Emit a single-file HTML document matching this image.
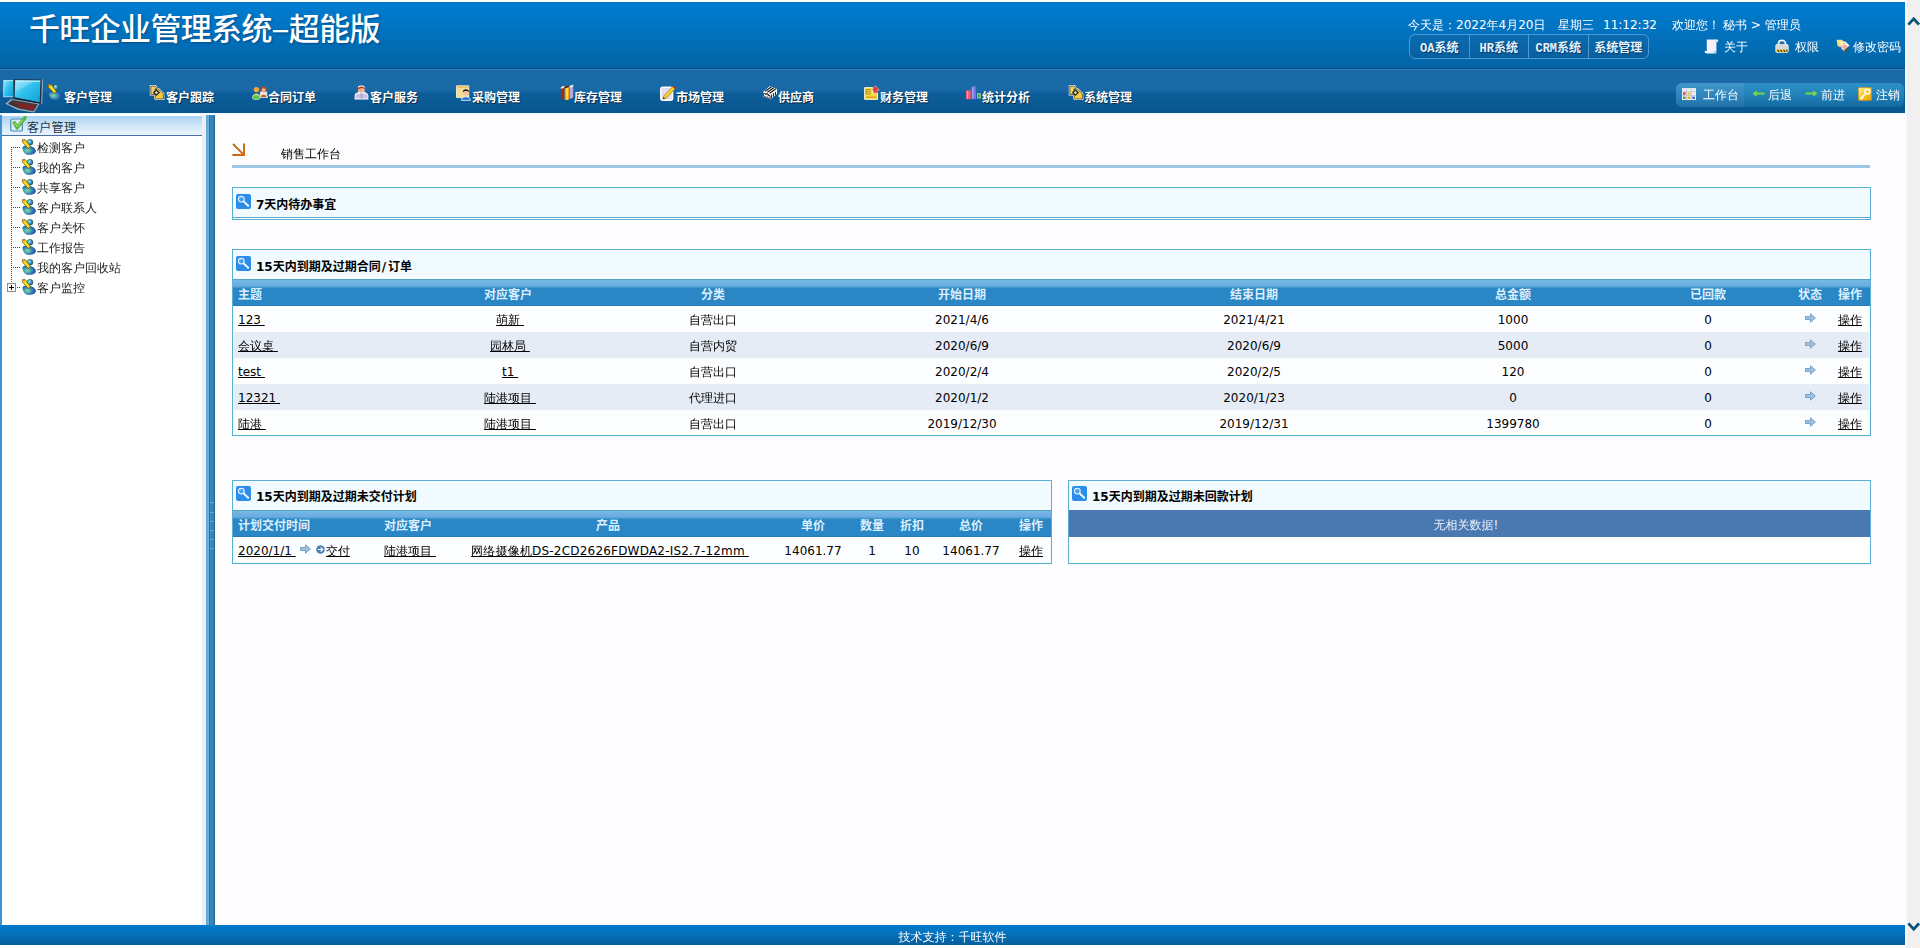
<!DOCTYPE html>
<html lang="zh-CN">
<head>
<meta charset="utf-8">
<title>千旺企业管理系统-超能版</title>
<style>
html,body{margin:0;padding:0;width:1920px;height:948px;overflow:hidden;background:#fff;}
body{position:relative;font-family:"DejaVu Sans","Liberation Sans","WenQuanYi Zen Hei","Noto Sans CJK SC",sans-serif;font-size:12px;color:#000;}
.abs{position:absolute;}
a{color:#000;text-decoration:underline;}
svg{display:block;}
.bf,.nv,.ptitle,.th,.thl{font-family:"DejaVu Sans","Liberation Sans","Noto Sans CJK SC",sans-serif;}

/* ---------- header ---------- */
#hdr{left:0;top:2px;width:1905px;height:66px;background:linear-gradient(#0a6fb8 0px,#007bce 2px,#007acc 8px,#0273c0 28px,#0364a5 66px);}
#hdrline{left:0;top:68px;width:1905px;height:1px;background:#064b84;}
#hdrline2{left:0;top:69px;width:1905px;height:1px;background:#3482bb;}
#title{left:29px;top:6px;font-family:"Liberation Sans","Noto Sans CJK SC",sans-serif;font-weight:500;font-size:31px;line-height:42px;color:#fff;white-space:nowrap;letter-spacing:-0.65px;text-shadow:1px 1px 2px rgba(0,40,90,.55);}
#title span{display:inline-block;width:17px;text-align:center;letter-spacing:0;font-weight:normal;font-family:"Noto Sans CJK SC",sans-serif;}
#title span b{display:inline-block;transform:scaleX(1.9);font-weight:normal;}
#today{left:1408px;top:17px;height:16px;line-height:16px;color:#fff;white-space:nowrap;font-size:12px;}
#sysbtns{left:1409px;top:34px;width:238px;height:23px;border:1px solid #4b9ad6;border-radius:6px;background:linear-gradient(#0b6bb0,#09609f);overflow:hidden;display:flex;}
#sysbtns div{width:59px;border-right:1px solid #4b9ad6;height:23px;line-height:29px;text-align:center;color:#e6f3ff;font-weight:bold;font-size:12px;font-family:"Liberation Mono","Noto Sans CJK SC",monospace;text-shadow:1px 1px 1px #033a66;}
#sysbtns div:last-child{border-right:0;width:60px;}
#today span{position:absolute;top:0;}
.toplink{color:#fff;white-space:nowrap;height:16px;line-height:16px;font-size:12px;}

/* ---------- nav ---------- */
#nav{left:0;top:70px;width:1905px;height:43px;background:linear-gradient(#1a6aa7 0px,#196aa7 18px,#1667a3 21px,#0c5d99 24px,#0a5b96 30px,#09568f 43px);}
#navline{left:0;top:113px;width:1905px;height:2px;background:linear-gradient(#e6f4fd,#ffffff);}
.nv{top:90px;height:16px;line-height:16px;color:#fff;font-weight:bold;font-size:12px;white-space:nowrap;text-shadow:1px 1px 0 #0a2f52,0 1px 0 #0a2f52;}
.ni{top:84px;width:16px;height:16px;}
#rnav{left:1676px;top:83px;width:228px;height:24px;border-radius:6px;background:linear-gradient(#2e8fc6 0%,#2282ba 50%,#12699f 100%);}
#rnav1{left:1676px;top:83px;width:68px;height:24px;border-radius:6px 0 0 6px;background:linear-gradient(#3f97cc 0%,#2f86bd 50%,#1f72a8 100%);}
.rn{top:87px;height:16px;line-height:16px;color:#fff;font-size:12px;white-space:nowrap;}

/* ---------- sidebar ---------- */
#sbL{left:0;top:115px;width:2px;height:810px;background:#3d94d4;}
#sbhead{left:2px;top:116px;width:200px;height:19px;background:linear-gradient(#a9d3f3 0%,#cfe6f8 50%,#e9f4fd 100%);border-bottom:1px solid #4a6ea5;}
#sbhead span{position:absolute;left:25px;top:4px;letter-spacing:0.3px;line-height:16px;font-size:12px;color:#26364c;white-space:nowrap;font-family:"Liberation Sans","Noto Sans CJK SC",sans-serif;}
#sbstrip{left:202px;top:115px;width:4px;height:810px;background:#ecedf8;}
#split1{left:206px;top:115px;width:3px;height:810px;background:linear-gradient(90deg,#5aa3c8,#72b7de);}
#split2{left:209px;top:115px;width:6px;height:810px;background:linear-gradient(90deg,#2c6f9e 0px,#2c6f9e 1px,#3a8cc5 1px,#2b80b9 5px,#2a6089 5px,#2a6089 6px);}
.tr{left:37px;height:16px;line-height:16px;font-size:12px;color:#222;white-space:nowrap;}
.ti{left:21px;width:16px;height:16px;}
.dotsh{left:13px;width:8px;height:1px;background:repeating-linear-gradient(90deg,#444 0 1px,transparent 1px 2px);}
#dotsv{left:11px;top:147px;width:1px;height:136px;background:repeating-linear-gradient(180deg,#444 0 1px,transparent 1px 2px);}

/* ---------- main ---------- */
#main{left:215px;top:115px;width:1690px;height:810px;background:#fdfdff;}
#crumb{left:281px;top:146px;height:16px;line-height:16px;font-size:12px;white-space:nowrap;}
#crumbline{left:232px;top:165px;width:1638px;height:3px;background:#9cc6e4;}
.panel{border:1px solid #5bb0d2;background:#f1faff;box-sizing:border-box;}
.ptitle{font-weight:bold;font-size:12px;line-height:16px;height:16px;white-space:nowrap;color:#000;}
.thead{background:linear-gradient(#5b9fbc 0px,#5b9fbc 1px,#74bae3 1px,#6ba9e3 7px,#4a9fd2 8px,#3b99cc 8.5px,#2a86c4 9.5px,#2a86c4 25.5px,#2476b6 27px);}
.th{color:#dcefff;font-weight:bold;font-size:12px;line-height:16px;height:16px;white-space:nowrap;text-align:center;transform:translateX(-50%);}
.thl{color:#dcefff;font-weight:bold;font-size:12px;line-height:16px;height:16px;white-space:nowrap;}
.td{font-size:12px;line-height:16px;height:16px;white-space:nowrap;text-align:center;transform:translateX(-50%);}
.tdl{font-size:12px;line-height:16px;height:16px;white-space:nowrap;}
.r0{background:#fcfdff;}
.r1{background:#e6ecf6;}

/* ---------- footer / scrollbar ---------- */
#foot{left:0;top:925px;width:1905px;height:20px;background:linear-gradient(#0079cb 0%,#0574c0 35%,#075d9b 100%);}
#foottxt{left:0;top:929px;width:1905px;text-align:center;color:#fff;font-size:12px;line-height:16px;height:16px;}
#sbar{left:1905px;top:0;width:15px;height:948px;background:linear-gradient(90deg,#fafcff 0,#fafcff 1.5px,#f0f0f0 2.5px,#f0f0f0 100%);}
</style>
</head>
<body>
<!-- header -->
<div id="hdr" class="abs"></div>
<div id="hdrline" class="abs"></div>
<div id="hdrline2" class="abs"></div>
<div id="title" class="abs">千旺企业管理系统<span><b>-</b></span>超能版</div>
<div id="today" class="abs"><span style="left:0">今天是：2022年4月20日</span><span style="left:150px">星期三</span><span style="left:195px">11:12:32</span><span style="left:264px">欢迎您！</span><span style="left:315px">秘书 &gt; 管理员</span></div>
<div id="sysbtns" class="abs"><div>OA系统</div><div>HR系统</div><div>CRM系统</div><div>系统管理</div></div>
<div class="abs toplink" style="left:1724px;top:39px;">关于</div>
<div class="abs toplink" style="left:1795px;top:39px;">权限</div>
<div class="abs toplink" style="left:1853px;top:39px;">修改密码</div>

<!-- nav -->
<div id="nav" class="abs"></div>
<div id="navline" class="abs"></div>
<div class="abs nv" style="left:64px;">客户管理</div>
<div class="abs nv" style="left:166px;">客户跟踪</div>
<div class="abs nv" style="left:268px;">合同订单</div>
<div class="abs nv" style="left:370px;">客户服务</div>
<div class="abs nv" style="left:472px;">采购管理</div>
<div class="abs nv" style="left:574px;">库存管理</div>
<div class="abs nv" style="left:676px;">市场管理</div>
<div class="abs nv" style="left:778px;">供应商</div>
<div class="abs nv" style="left:880px;">财务管理</div>
<div class="abs nv" style="left:982px;">统计分析</div>
<div class="abs nv" style="left:1084px;">系统管理</div>
<div id="rnav" class="abs"></div>
<div id="rnav1" class="abs"></div>
<div class="abs rn" style="left:1703px;">工作台</div>
<div class="abs rn" style="left:1768px;">后退</div>
<div class="abs rn" style="left:1821px;">前进</div>
<div class="abs rn" style="left:1876px;">注销</div>

<!-- sidebar -->
<div id="sbL" class="abs"></div>
<div id="sbhead" class="abs"><span>客户管理</span></div>
<div id="sbstrip" class="abs"></div>
<div id="split1" class="abs"></div>
<div id="split2" class="abs"></div>
<div class="abs" style="left:210px;top:502px;width:4px;height:1px;background:#63a8d2;"></div><div class="abs" style="left:210px;top:512px;width:4px;height:1px;background:#63a8d2;"></div><div class="abs" style="left:210px;top:521px;width:4px;height:1px;background:#63a8d2;"></div><div class="abs" style="left:210px;top:530px;width:4px;height:1px;background:#63a8d2;"></div><div class="abs" style="left:210px;top:539px;width:4px;height:1px;background:#63a8d2;"></div><div class="abs" style="left:210px;top:548px;width:4px;height:1px;background:#63a8d2;"></div><div id="dotsv" class="abs"></div><div class="abs dotsh" style="top:147px;"></div><div class="abs dotsh" style="top:167px;"></div><div class="abs dotsh" style="top:187px;"></div><div class="abs dotsh" style="top:207px;"></div><div class="abs dotsh" style="top:227px;"></div><div class="abs dotsh" style="top:247px;"></div><div class="abs dotsh" style="top:267px;"></div><div class="abs dotsh" style="top:287px;left:17px;width:4px;"></div>
<div class="abs tr" style="top:140px;">检测客户</div>
<div class="abs tr" style="top:160px;">我的客户</div>
<div class="abs tr" style="top:180px;">共享客户</div>
<div class="abs tr" style="top:200px;">客户联系人</div>
<div class="abs tr" style="top:220px;">客户关怀</div>
<div class="abs tr" style="top:240px;">工作报告</div>
<div class="abs tr" style="top:260px;">我的客户回收站</div>
<div class="abs tr" style="top:280px;">客户监控</div>

<!-- main -->
<div id="main" class="abs"></div>
<div id="crumb" class="abs">销售工作台</div>
<div id="crumbline" class="abs"></div>

<!--MAINSTART-->
<div class="abs panel" style="left:232px;top:187px;width:1639px;height:33px;"></div>
<div class="abs" style="left:233px;top:217px;width:1637px;height:1px;background:#5fa8c8;"></div>
<div class="abs" style="left:233px;top:218px;width:1637px;height:1px;background:#fdfdff;"></div>
<svg class="abs" style="left:236px;top:194px" width="15" height="15" viewBox="0 0 15 15"><rect x="0" y="0" width="15" height="15" rx="2" fill="#2b8de9"/><circle cx="5.3" cy="5.1" r="2.9" fill="#3f9df0" stroke="#e8f4ff" stroke-width="1.1"/><path d="M4 4.4 A1.6 1.6 0 0 1 5.4 3.4" fill="none" stroke="#dff0ff" stroke-width=".7"/><path d="M7.8 7.6 L12.2 11.8" stroke="#f4faff" stroke-width="2" stroke-linecap="round"/></svg>
<div class="abs ptitle" style="left:256px;top:197px;">7天内待办事宜</div>
<div class="abs panel" style="left:232px;top:249px;width:1639px;height:187px;"></div>
<svg class="abs" style="left:236px;top:256px" width="15" height="15" viewBox="0 0 15 15"><rect x="0" y="0" width="15" height="15" rx="2" fill="#2b8de9"/><circle cx="5.3" cy="5.1" r="2.9" fill="#3f9df0" stroke="#e8f4ff" stroke-width="1.1"/><path d="M4 4.4 A1.6 1.6 0 0 1 5.4 3.4" fill="none" stroke="#dff0ff" stroke-width=".7"/><path d="M7.8 7.6 L12.2 11.8" stroke="#f4faff" stroke-width="2" stroke-linecap="round"/></svg>
<div class="abs ptitle" style="left:256px;top:259px;">15天内到期及过期合同<span style="padding:0 2px 0 1px">/</span>订单</div>
<div class="abs thead" style="left:233px;top:279px;width:1637px;height:27px;"></div>
<div class="abs thl" style="left:238px;top:287px;">主题</div>
<div class="abs th" style="left:508px;top:287px;">对应客户</div>
<div class="abs th" style="left:713px;top:287px;">分类</div>
<div class="abs th" style="left:962px;top:287px;">开始日期</div>
<div class="abs th" style="left:1254px;top:287px;">结束日期</div>
<div class="abs th" style="left:1513px;top:287px;">总金额</div>
<div class="abs th" style="left:1708px;top:287px;">已回款</div>
<div class="abs th" style="left:1810px;top:287px;">状态</div>
<div class="abs th" style="left:1850px;top:287px;">操作</div>
<div class="abs r0" style="left:234px;top:306px;width:1635px;height:26px;"></div>
<div class="abs tdl" style="left:238px;top:312px;"><a>123&nbsp;</a></div>
<div class="abs td" style="left:510px;top:312px;"><a>萌新&nbsp;</a></div>
<div class="abs td" style="left:713px;top:312px;">自营出口</div>
<div class="abs td" style="left:962px;top:312px;">2021/4/6</div>
<div class="abs td" style="left:1254px;top:312px;">2021/4/21</div>
<div class="abs td" style="left:1513px;top:312px;">1000</div>
<div class="abs td" style="left:1708px;top:312px;">0</div>
<svg class="abs" style="left:1805px;top:313px" width="11" height="10" viewBox="0 0 11 10"><path d="M0.5 3.5 H5.5 V0.8 L10.3 5 L5.5 9.2 V6.5 H0.5 Z" fill="#9fc0dc" stroke="#6f9cc4" stroke-width="0.9" stroke-linejoin="round"/></svg>
<div class="abs td" style="left:1850px;top:312px;"><a>操作</a></div>
<div class="abs r1" style="left:234px;top:332px;width:1635px;height:26px;"></div>
<div class="abs tdl" style="left:238px;top:338px;"><a>会议桌&nbsp;</a></div>
<div class="abs td" style="left:510px;top:338px;"><a>园林局&nbsp;</a></div>
<div class="abs td" style="left:713px;top:338px;">自营内贸</div>
<div class="abs td" style="left:962px;top:338px;">2020/6/9</div>
<div class="abs td" style="left:1254px;top:338px;">2020/6/9</div>
<div class="abs td" style="left:1513px;top:338px;">5000</div>
<div class="abs td" style="left:1708px;top:338px;">0</div>
<svg class="abs" style="left:1805px;top:339px" width="11" height="10" viewBox="0 0 11 10"><path d="M0.5 3.5 H5.5 V0.8 L10.3 5 L5.5 9.2 V6.5 H0.5 Z" fill="#9fc0dc" stroke="#6f9cc4" stroke-width="0.9" stroke-linejoin="round"/></svg>
<div class="abs td" style="left:1850px;top:338px;"><a>操作</a></div>
<div class="abs r0" style="left:234px;top:358px;width:1635px;height:26px;"></div>
<div class="abs tdl" style="left:238px;top:364px;"><a>test&nbsp;</a></div>
<div class="abs td" style="left:510px;top:364px;"><a>t1&nbsp;</a></div>
<div class="abs td" style="left:713px;top:364px;">自营出口</div>
<div class="abs td" style="left:962px;top:364px;">2020/2/4</div>
<div class="abs td" style="left:1254px;top:364px;">2020/2/5</div>
<div class="abs td" style="left:1513px;top:364px;">120</div>
<div class="abs td" style="left:1708px;top:364px;">0</div>
<svg class="abs" style="left:1805px;top:365px" width="11" height="10" viewBox="0 0 11 10"><path d="M0.5 3.5 H5.5 V0.8 L10.3 5 L5.5 9.2 V6.5 H0.5 Z" fill="#9fc0dc" stroke="#6f9cc4" stroke-width="0.9" stroke-linejoin="round"/></svg>
<div class="abs td" style="left:1850px;top:364px;"><a>操作</a></div>
<div class="abs r1" style="left:234px;top:384px;width:1635px;height:26px;"></div>
<div class="abs tdl" style="left:238px;top:390px;"><a>12321&nbsp;</a></div>
<div class="abs td" style="left:510px;top:390px;"><a>陆港项目&nbsp;</a></div>
<div class="abs td" style="left:713px;top:390px;">代理进口</div>
<div class="abs td" style="left:962px;top:390px;">2020/1/2</div>
<div class="abs td" style="left:1254px;top:390px;">2020/1/23</div>
<div class="abs td" style="left:1513px;top:390px;">0</div>
<div class="abs td" style="left:1708px;top:390px;">0</div>
<svg class="abs" style="left:1805px;top:391px" width="11" height="10" viewBox="0 0 11 10"><path d="M0.5 3.5 H5.5 V0.8 L10.3 5 L5.5 9.2 V6.5 H0.5 Z" fill="#9fc0dc" stroke="#6f9cc4" stroke-width="0.9" stroke-linejoin="round"/></svg>
<div class="abs td" style="left:1850px;top:390px;"><a>操作</a></div>
<div class="abs r0" style="left:234px;top:410px;width:1635px;height:25px;"></div>
<div class="abs tdl" style="left:238px;top:416px;"><a>陆港&nbsp;</a></div>
<div class="abs td" style="left:510px;top:416px;"><a>陆港项目&nbsp;</a></div>
<div class="abs td" style="left:713px;top:416px;">自营出口</div>
<div class="abs td" style="left:962px;top:416px;">2019/12/30</div>
<div class="abs td" style="left:1254px;top:416px;">2019/12/31</div>
<div class="abs td" style="left:1513px;top:416px;">1399780</div>
<div class="abs td" style="left:1708px;top:416px;">0</div>
<svg class="abs" style="left:1805px;top:417px" width="11" height="10" viewBox="0 0 11 10"><path d="M0.5 3.5 H5.5 V0.8 L10.3 5 L5.5 9.2 V6.5 H0.5 Z" fill="#9fc0dc" stroke="#6f9cc4" stroke-width="0.9" stroke-linejoin="round"/></svg>
<div class="abs td" style="left:1850px;top:416px;"><a>操作</a></div>
<div class="abs panel" style="left:232px;top:480px;width:820px;height:84px;"></div>
<svg class="abs" style="left:236px;top:486px" width="15" height="15" viewBox="0 0 15 15"><rect x="0" y="0" width="15" height="15" rx="2" fill="#2b8de9"/><circle cx="5.3" cy="5.1" r="2.9" fill="#3f9df0" stroke="#e8f4ff" stroke-width="1.1"/><path d="M4 4.4 A1.6 1.6 0 0 1 5.4 3.4" fill="none" stroke="#dff0ff" stroke-width=".7"/><path d="M7.8 7.6 L12.2 11.8" stroke="#f4faff" stroke-width="2" stroke-linecap="round"/></svg>
<div class="abs ptitle" style="left:256px;top:489px;">15天内到期及过期未交付计划</div>
<div class="abs thead" style="left:233px;top:510px;width:818px;height:27px;"></div>
<div class="abs thl" style="left:238px;top:518px;">计划交付时间</div>
<div class="abs th" style="left:408px;top:518px;">对应客户</div>
<div class="abs th" style="left:608px;top:518px;">产品</div>
<div class="abs th" style="left:813px;top:518px;">单价</div>
<div class="abs th" style="left:872px;top:518px;">数量</div>
<div class="abs th" style="left:912px;top:518px;">折扣</div>
<div class="abs th" style="left:971px;top:518px;">总价</div>
<div class="abs th" style="left:1031px;top:518px;">操作</div>
<div class="abs r0" style="left:234px;top:537px;width:816px;height:25px;"></div>
<div class="abs tdl" style="left:238px;top:543px;"><a>2020/1/1&nbsp;</a></div>
<svg class="abs" style="left:300px;top:544px" width="11" height="10" viewBox="0 0 11 10"><path d="M0.5 3.5 H5.5 V0.8 L10.3 5 L5.5 9.2 V6.5 H0.5 Z" fill="#9fc0dc" stroke="#6f9cc4" stroke-width="0.9" stroke-linejoin="round"/></svg>
<svg class="abs" style="left:316px;top:545px" width="9" height="9" viewBox="0 0 9 9"><circle cx="4.5" cy="4.5" r="4.3" fill="#4a80b8"/><path d="M1.8 4.5 H6.6 M4.6 2.4 L6.8 4.5 L4.6 6.6" fill="none" stroke="#fff" stroke-width="1.1"/></svg>
<div class="abs tdl" style="left:326px;top:543px;"><a>交付</a></div>
<div class="abs td" style="left:410px;top:543px;"><a>陆港项目&nbsp;</a></div>
<div class="abs td" style="left:610px;top:543px;letter-spacing:0.2px;"><a>网络摄像机DS-2CD2626FDWDA2-IS2.7-12mm&nbsp;</a></div>
<div class="abs td" style="left:813px;top:543px;">14061.77</div>
<div class="abs td" style="left:872px;top:543px;">1</div>
<div class="abs td" style="left:912px;top:543px;">10</div>
<div class="abs td" style="left:971px;top:543px;">14061.77</div>
<div class="abs td" style="left:1031px;top:543px;"><a>操作</a></div>
<div class="abs panel" style="left:1068px;top:480px;width:803px;height:84px;"></div>
<svg class="abs" style="left:1072px;top:486px" width="15" height="15" viewBox="0 0 15 15"><rect x="0" y="0" width="15" height="15" rx="2" fill="#2b8de9"/><circle cx="5.3" cy="5.1" r="2.9" fill="#3f9df0" stroke="#e8f4ff" stroke-width="1.1"/><path d="M4 4.4 A1.6 1.6 0 0 1 5.4 3.4" fill="none" stroke="#dff0ff" stroke-width=".7"/><path d="M7.8 7.6 L12.2 11.8" stroke="#f4faff" stroke-width="2" stroke-linecap="round"/></svg>
<div class="abs ptitle" style="left:1092px;top:489px;">15天内到期及过期未回款计划</div>
<div class="abs" style="left:1069px;top:510px;width:801px;height:27px;background:#4a78b1;"></div>
<div class="abs td" style="left:1466px;top:517px;color:#e8f1fb;">无相关数据!</div>
<div class="abs" style="left:1069px;top:537px;width:801px;height:26px;background:#fff;"></div>
<!--MAINEND-->
<!--ICONSTART-->
<svg class="abs" style="left:0;top:0" width="0" height="0"><defs>
<radialGradient id="gHead" cx="35%" cy="35%" r="75%"><stop offset="0" stop-color="#a8f2ea"/><stop offset=".55" stop-color="#2f8ed0"/><stop offset="1" stop-color="#1c4c8c"/></radialGradient>
<radialGradient id="gBody" cx="38%" cy="55%" r="65%"><stop offset="0" stop-color="#86e096"/><stop offset=".35" stop-color="#4fa6b4"/><stop offset=".7" stop-color="#2a6cb8"/><stop offset="1" stop-color="#173f8a"/></radialGradient>
<linearGradient id="gScr" x1="0" x2="1" y1="0" y2="1"><stop offset="0" stop-color="#8fe6fb"/><stop offset=".45" stop-color="#2fc0ec"/><stop offset="1" stop-color="#0f9fd6"/></linearGradient>
<linearGradient id="gKey" x1="0" x2="1" y1="0" y2="1"><stop offset="0" stop-color="#fff3a0"/><stop offset=".5" stop-color="#f7c623"/><stop offset="1" stop-color="#e89b10"/></linearGradient>
<linearGradient id="gArw" x1="0" x2="1" y1="0" y2="1"><stop offset="0" stop-color="#a87416"/><stop offset="1" stop-color="#de6208"/></linearGradient>
</defs></svg>
<svg class="abs" style="left:48px;top:84px" width="14" height="16" viewBox="0 0 14 16"><path d="M0.4 8.4 C1.4 6.6 5.4 6 8.4 7.2 C11.8 7.8 14 10.2 13.8 12.4 C13.2 15 9.4 16 6.6 15.8 C3 15.4 0.8 13 0.4 8.4Z" fill="url(#gBody)"/>
<circle cx="8" cy="3.3" r="2.9" fill="url(#gHead)" stroke="#2b5f3c" stroke-width=".7"/>
<path d="M0.5 0.6 L3.2 0.6 L8.4 7.4 L6.2 9.4 L0.5 3.2 Z" fill="#f7df1e" stroke="#5c4a00" stroke-width=".7"/>
<path d="M0.6 0.7 L3.1 0.7 L3.9 1.8 L0.6 2.9Z" fill="#e2a416"/></svg>
<svg class="abs" style="left:22px;top:139px" width="14" height="16" viewBox="0 0 14 16"><path d="M0.4 8.4 C1.4 6.6 5.4 6 8.4 7.2 C11.8 7.8 14 10.2 13.8 12.4 C13.2 15 9.4 16 6.6 15.8 C3 15.4 0.8 13 0.4 8.4Z" fill="url(#gBody)"/>
<circle cx="8" cy="3.3" r="2.9" fill="url(#gHead)" stroke="#2b5f3c" stroke-width=".7"/>
<path d="M0.5 0.6 L3.2 0.6 L8.4 7.4 L6.2 9.4 L0.5 3.2 Z" fill="#f7df1e" stroke="#5c4a00" stroke-width=".7"/>
<path d="M0.6 0.7 L3.1 0.7 L3.9 1.8 L0.6 2.9Z" fill="#e2a416"/></svg>
<svg class="abs" style="left:22px;top:159px" width="14" height="16" viewBox="0 0 14 16"><path d="M0.4 8.4 C1.4 6.6 5.4 6 8.4 7.2 C11.8 7.8 14 10.2 13.8 12.4 C13.2 15 9.4 16 6.6 15.8 C3 15.4 0.8 13 0.4 8.4Z" fill="url(#gBody)"/>
<circle cx="8" cy="3.3" r="2.9" fill="url(#gHead)" stroke="#2b5f3c" stroke-width=".7"/>
<path d="M0.5 0.6 L3.2 0.6 L8.4 7.4 L6.2 9.4 L0.5 3.2 Z" fill="#f7df1e" stroke="#5c4a00" stroke-width=".7"/>
<path d="M0.6 0.7 L3.1 0.7 L3.9 1.8 L0.6 2.9Z" fill="#e2a416"/></svg>
<svg class="abs" style="left:22px;top:179px" width="14" height="16" viewBox="0 0 14 16"><path d="M0.4 8.4 C1.4 6.6 5.4 6 8.4 7.2 C11.8 7.8 14 10.2 13.8 12.4 C13.2 15 9.4 16 6.6 15.8 C3 15.4 0.8 13 0.4 8.4Z" fill="url(#gBody)"/>
<circle cx="8" cy="3.3" r="2.9" fill="url(#gHead)" stroke="#2b5f3c" stroke-width=".7"/>
<path d="M0.5 0.6 L3.2 0.6 L8.4 7.4 L6.2 9.4 L0.5 3.2 Z" fill="#f7df1e" stroke="#5c4a00" stroke-width=".7"/>
<path d="M0.6 0.7 L3.1 0.7 L3.9 1.8 L0.6 2.9Z" fill="#e2a416"/></svg>
<svg class="abs" style="left:22px;top:199px" width="14" height="16" viewBox="0 0 14 16"><path d="M0.4 8.4 C1.4 6.6 5.4 6 8.4 7.2 C11.8 7.8 14 10.2 13.8 12.4 C13.2 15 9.4 16 6.6 15.8 C3 15.4 0.8 13 0.4 8.4Z" fill="url(#gBody)"/>
<circle cx="8" cy="3.3" r="2.9" fill="url(#gHead)" stroke="#2b5f3c" stroke-width=".7"/>
<path d="M0.5 0.6 L3.2 0.6 L8.4 7.4 L6.2 9.4 L0.5 3.2 Z" fill="#f7df1e" stroke="#5c4a00" stroke-width=".7"/>
<path d="M0.6 0.7 L3.1 0.7 L3.9 1.8 L0.6 2.9Z" fill="#e2a416"/></svg>
<svg class="abs" style="left:22px;top:219px" width="14" height="16" viewBox="0 0 14 16"><path d="M0.4 8.4 C1.4 6.6 5.4 6 8.4 7.2 C11.8 7.8 14 10.2 13.8 12.4 C13.2 15 9.4 16 6.6 15.8 C3 15.4 0.8 13 0.4 8.4Z" fill="url(#gBody)"/>
<circle cx="8" cy="3.3" r="2.9" fill="url(#gHead)" stroke="#2b5f3c" stroke-width=".7"/>
<path d="M0.5 0.6 L3.2 0.6 L8.4 7.4 L6.2 9.4 L0.5 3.2 Z" fill="#f7df1e" stroke="#5c4a00" stroke-width=".7"/>
<path d="M0.6 0.7 L3.1 0.7 L3.9 1.8 L0.6 2.9Z" fill="#e2a416"/></svg>
<svg class="abs" style="left:22px;top:239px" width="14" height="16" viewBox="0 0 14 16"><path d="M0.4 8.4 C1.4 6.6 5.4 6 8.4 7.2 C11.8 7.8 14 10.2 13.8 12.4 C13.2 15 9.4 16 6.6 15.8 C3 15.4 0.8 13 0.4 8.4Z" fill="url(#gBody)"/>
<circle cx="8" cy="3.3" r="2.9" fill="url(#gHead)" stroke="#2b5f3c" stroke-width=".7"/>
<path d="M0.5 0.6 L3.2 0.6 L8.4 7.4 L6.2 9.4 L0.5 3.2 Z" fill="#f7df1e" stroke="#5c4a00" stroke-width=".7"/>
<path d="M0.6 0.7 L3.1 0.7 L3.9 1.8 L0.6 2.9Z" fill="#e2a416"/></svg>
<svg class="abs" style="left:22px;top:259px" width="14" height="16" viewBox="0 0 14 16"><path d="M0.4 8.4 C1.4 6.6 5.4 6 8.4 7.2 C11.8 7.8 14 10.2 13.8 12.4 C13.2 15 9.4 16 6.6 15.8 C3 15.4 0.8 13 0.4 8.4Z" fill="url(#gBody)"/>
<circle cx="8" cy="3.3" r="2.9" fill="url(#gHead)" stroke="#2b5f3c" stroke-width=".7"/>
<path d="M0.5 0.6 L3.2 0.6 L8.4 7.4 L6.2 9.4 L0.5 3.2 Z" fill="#f7df1e" stroke="#5c4a00" stroke-width=".7"/>
<path d="M0.6 0.7 L3.1 0.7 L3.9 1.8 L0.6 2.9Z" fill="#e2a416"/></svg>
<svg class="abs" style="left:22px;top:279px" width="14" height="16" viewBox="0 0 14 16"><path d="M0.4 8.4 C1.4 6.6 5.4 6 8.4 7.2 C11.8 7.8 14 10.2 13.8 12.4 C13.2 15 9.4 16 6.6 15.8 C3 15.4 0.8 13 0.4 8.4Z" fill="url(#gBody)"/>
<circle cx="8" cy="3.3" r="2.9" fill="url(#gHead)" stroke="#2b5f3c" stroke-width=".7"/>
<path d="M0.5 0.6 L3.2 0.6 L8.4 7.4 L6.2 9.4 L0.5 3.2 Z" fill="#f7df1e" stroke="#5c4a00" stroke-width=".7"/>
<path d="M0.6 0.7 L3.1 0.7 L3.9 1.8 L0.6 2.9Z" fill="#e2a416"/></svg>
<svg class="abs" style="left:149px;top:84px" width="16" height="17" viewBox="0 0 16 17"><path d="M0.8 1 H6.6 L8.2 2.8 V4 H9.8 L15.4 9.4 V16 H6.4 L5 14.6 V11.4 H0.8Z" fill="#fff"/>
<path d="M1.8 2 H6 L7.2 3.4 V10.4 H1.8Z" fill="#f0d26a" stroke="#2a2618" stroke-width=".7"/>
<path d="M6 5 H9.4 L14.4 9.8 V15 H6.8 L6 14.2Z" fill="#f4cc40" stroke="#2a2618" stroke-width=".7"/>
<path d="M3.8 8.6 L7.4 5.2 L11 8.6 L7.4 12Z" fill="#26261e"/>
<path d="M5.8 8.6 L7.4 7 L9 8.6 L7.4 10.2Z" fill="#efe9d0"/></svg>
<svg class="abs" style="left:1068px;top:84px" width="16" height="17" viewBox="0 0 16 17"><path d="M0.8 1 H6.6 L8.2 2.8 V4 H9.8 L15.4 9.4 V16 H6.4 L5 14.6 V11.4 H0.8Z" fill="#fff"/>
<path d="M1.8 2 H6 L7.2 3.4 V10.4 H1.8Z" fill="#f0d26a" stroke="#2a2618" stroke-width=".7"/>
<path d="M6 5 H9.4 L14.4 9.8 V15 H6.8 L6 14.2Z" fill="#f4cc40" stroke="#2a2618" stroke-width=".7"/>
<path d="M3.8 8.6 L7.4 5.2 L11 8.6 L7.4 12Z" fill="#26261e"/>
<path d="M5.8 8.6 L7.4 7 L9 8.6 L7.4 10.2Z" fill="#efe9d0"/></svg>
<svg class="abs" style="left:252px;top:86px" width="16" height="14" viewBox="0 0 16 14"><path d="M8.3 6.5 C8.3 4.2 14.8 4.2 14.8 6.5 V10.5 H15.8 V11.6 H8.3Z" fill="#f4ead6" stroke="#fff" stroke-width=".5"/>
<circle cx="11.6" cy="3.3" r="2.9" fill="#c44a1c"/><circle cx="11.6" cy="4.1" r="1.9" fill="#f6b27a"/>
<path d="M9 11 C9 7.6 14.2 7.6 14.2 11Z" fill="#d9541f"/>
<circle cx="4.4" cy="3.6" r="2.7" fill="#f3a83a"/><path d="M1 10.5 C1 6.4 7.8 6.4 7.8 10.5Z" fill="#f0b54a"/>
<ellipse cx="4.2" cy="11.2" rx="4" ry="2.5" fill="#5fc04a" stroke="#eaffea" stroke-width=".6"/></svg>
<svg class="abs" style="left:354px;top:85px" width="15" height="15" viewBox="0 0 15 15"><path d="M0.6 14.4 V10.8 C0.6 8.2 3.2 7.4 4.4 7.2 L4 1.8 C5 0.2 9.6 0.2 10.6 1.8 L10.4 7.2 C12 7.4 14.4 8.4 14.4 10.8 V14.4Z" fill="#fff"/>
<path d="M1.4 13.6 V11 C1.4 9 3.6 8.2 7.4 8.2 C11.2 8.2 13.6 9 13.6 11 V13.6Z" fill="#cdbfe6"/>
<path d="M6.4 8.4 H8.4 V13.6 H6.4Z" fill="#9fb2d8"/>
<circle cx="7.3" cy="4.6" r="3.1" fill="#f2b38a"/>
<path d="M3.9 4.8 C3.4 0.4 11.2 0.4 10.7 4.8 C9.5 3 8 2.8 6.6 3.4 C5.4 3.9 4.6 4 3.9 4.8Z" fill="#b8401c"/></svg>
<svg class="abs" style="left:456px;top:85px" width="15" height="16" viewBox="0 0 15 16"><path d="M0.5 0.8 H12.8 V12.6 H0.5Z" fill="#f6dc96" stroke="#fff7d8" stroke-width=".8"/>
<path d="M0.9 1.2 H12.4 V3 H0.9Z" fill="#e9c56a"/>
<path d="M5.4 15.4 C5.4 10.6 14.4 10.6 14.4 15.4Z" fill="#2a6fd6" stroke="#eaf3ff" stroke-width=".8"/>
<circle cx="9.9" cy="7.6" r="3" fill="#f0c49c"/>
<path d="M6.8 7.2 C6.6 3.4 13.2 3.4 13 7.2 C11.6 5.6 8.4 5.6 6.8 7.2Z" fill="#1a1a1a"/></svg>
<svg class="abs" style="left:560px;top:84px" width="14" height="17" viewBox="0 0 14 17"><path d="M0.8 3.2 L4.2 1.6 L4.6 14.6 L1.2 15.6Z" fill="#a42a1c"/>
<path d="M0.8 3.2 L4.2 1.6 L4.3 3.6 L0.9 5Z" fill="#f2eee8"/>
<path d="M4.6 2.8 L9.2 1.2 L9.2 15.6 L4.8 16Z" fill="#f2a41c"/>
<path d="M6.2 2.4 L8 1.7 L8 15.8 L6.3 15.9Z" fill="#ffe24a"/>
<path d="M4.6 2.8 L9.2 1.2 L9.2 3 L4.7 4.6Z" fill="#2a2a2a"/>
<path d="M9.6 2 L13.2 0.8 L13.2 13.8 L9.6 15Z" fill="#b9a6dc"/>
<path d="M9.6 2 L13.2 0.8 L13.2 2.6 L9.6 3.8Z" fill="#f4f2fa"/></svg>
<svg class="abs" style="left:660px;top:85px" width="16" height="16" viewBox="0 0 16 16"><rect x="0.8" y="2.2" width="11.8" height="13" rx="2" fill="#e4dcf6" stroke="#fff" stroke-width="1.5"/>
<path d="M3 14 L4 10.6 L12.6 1.6 L15 4 L6.4 13Z" fill="#f6cf2a" stroke="#7a5a00" stroke-width=".5"/>
<path d="M12.6 1.6 L13.8 0.4 L16 2.8 L15 4Z" fill="#d8283a"/>
<path d="M3 14 L3.6 12 L5 13.4Z" fill="#222"/></svg>
<svg class="abs" style="left:762px;top:85px" width="16" height="15" viewBox="0 0 16 15"><path d="M1 7 L8 1 L15 4 L15 9 L8 14.6 L1 11.4Z" fill="#fff"/>
<path d="M3.2 6.2 L9.6 1.8 M5.4 7.2 L11.8 2.8 M7.6 8.2 L14 3.8" stroke="#141414" stroke-width="1.1"/>
<path d="M1.6 8 L8 10.8 L8 14 L1.6 11Z" fill="#f4f4f4" stroke="#141414" stroke-width=".8"/>
<path d="M3.4 9.6 A1.6 1.6 0 1 1 5.6 11.6" fill="none" stroke="#141414" stroke-width=".9"/>
<path d="M9.4 9.6 L9.4 13 M11.4 8.2 L11.4 11.6 M13.4 6.8 L13.4 10.2" stroke="#141414" stroke-width="1"/></svg>
<svg class="abs" style="left:864px;top:85px" width="16" height="15" viewBox="0 0 16 15"><path d="M0.6 2.6 H8.6 V8 H13.6 V14.4 H0.6Z" fill="#f4dc3c" stroke="#fffbe0" stroke-width=".9"/>
<path d="M2.2 4.6 H7 M2.2 6.8 H7 M2.2 9 H7 M2.2 4.6 V9" stroke="#a8841c" stroke-width=".9" fill="none"/>
<path d="M2 11.4 H12.4 V13 H2Z" fill="#e6a81c"/>
<path d="M7.6 5.2 L11.4 0.6 L15.4 5.2 H13 V8.2 H9.8 V5.2Z" fill="#e0342c" stroke="#ffd8d0" stroke-width=".5"/></svg>
<svg class="abs" style="left:966px;top:86px" width="16" height="14" viewBox="0 0 16 14"><rect x="0" y="4.4" width="4.8" height="8.8" fill="#f25770"/><rect x="0.8" y="5.2" width="1.4" height="7.2" fill="#ff9aa8"/>
<rect x="5.4" y="0.4" width="4.8" height="12.8" fill="#6f74e0"/><rect x="6.2" y="1.2" width="1.4" height="11.2" fill="#a9a6f4"/>
<rect x="11" y="7" width="4" height="5.6" fill="#7fc48e"/><rect x="12.2" y="8.2" width="1.6" height="3.2" fill="#4f9a6a"/></svg>
<svg class="abs" style="left:2px;top:78px" width="43" height="35" viewBox="0 0 43 35"><path d="M3.2 25.8 L9 21 L37.6 25.6 L32.2 34.6 L16 32Z" fill="#93a7bb"/>
<path d="M6 25.4 L10.4 22 L35.8 26.2 L31.6 33.2 L17 30.6Z" fill="#4a3638"/>
<path d="M14 25 L33.6 27.6 L31 32 L18 29.6Z" fill="#7c2428"/>
<path d="M8.4 23.6 L16 27 L15 29.6 L6.6 26Z" fill="#3a3238"/>
<path d="M1.2 2 L11.6 2 L11.6 19.2 L1.2 19.2Z" fill="#b9d9ec"/>
<path d="M2.2 3 L11.6 3 L11.6 18.4 L2.2 18.4Z" fill="url(#gScr)"/>
<path d="M11.3 1.2 L40.4 1.5 L39.7 25.8 L11.3 20.6Z" fill="#24303c"/>
<path d="M40.4 1.5 L39.7 25.8" stroke="#c4d2e0" stroke-width=".8"/>
<path d="M13.2 2.3 L38.4 2.5 L37.7 24.4 L12.6 19.4Z" fill="url(#gScr)"/>
<path d="M13.2 2.3 L38.4 2.5 L38.3 4 L13.2 3.8Z" fill="#d8f8ff" opacity=".75"/>
<path d="M13.2 3.8 L31 4 L12.8 14Z" fill="#ffffff" opacity=".2"/>
<path d="M13 19.6 L37.6 24.4 L37.6 25.4 L13 20.6Z" fill="#12181e"/></svg>
<svg class="abs" style="left:10px;top:116px" width="17" height="16" viewBox="0 0 17 16"><rect x="0.8" y="3" width="11.6" height="12" rx="1.6" fill="#d4eefb" stroke="#4a8ab4" stroke-width="1.2"/>
<path d="M2.6 6.6 L5 5 L7.2 9 L14 0.6 L16.4 0.4 L16 3 L7.6 13.4 L6.4 13.4Z" fill="#58b83a" stroke="#3c9a2a" stroke-width=".4"/>
<path d="M4.6 7 L7.2 10.6 L13 3.6" fill="none" stroke="#b6e86a" stroke-width="1"/></svg>
<svg class="abs" style="left:7px;top:283px" width="9" height="9" viewBox="0 0 9 9"><rect x="0.5" y="0.5" width="8" height="8" fill="#fff" stroke="#8a8a8a"/><path d="M2 4.5 H7 M4.5 2 V7" stroke="#000" stroke-width="1"/></svg>
<svg class="abs" style="left:232px;top:143px" width="13" height="13" viewBox="0 0 13 13"><path d="M1 1 L11.6 11.6 M12 0.6 V12 H0.4" fill="none" stroke="url(#gArw)" stroke-width="1.9"/></svg>
<svg class="abs" style="left:1704px;top:39px" width="15" height="15" viewBox="0 0 15 15"><path d="M2.8 0.6 H13.2 C14.6 0.6 14.6 3 13.2 3 H12.4 V12 H2.8Z" fill="#f4f0fb"/>
<path d="M12.4 3 C11.2 3 11.2 0.6 12.6 0.6" fill="none" stroke="#c8c0dc" stroke-width=".6"/>
<path d="M0.6 12 H10.4 C10.4 13.2 11 14.4 12.4 14.4 H2.6 C1.2 14.4 0.6 13.2 0.6 12Z" fill="#e8f2ff"/>
<path d="M10.4 12 H12.4 V14.4 C11 14.4 10.4 13.2 10.4 12Z" fill="#cfd8ec"/></svg>
<svg class="abs" style="left:1775px;top:39px" width="14" height="14" viewBox="0 0 14 14"><path d="M3.6 6 V4 C3.6 0.6 10.4 0.6 10.4 4 V6" fill="none" stroke="#f4f4f4" stroke-width="1.7"/>
<rect x="0.8" y="5.4" width="12.4" height="8" rx="1.2" fill="#d9d9d4" stroke="#f4efe0" stroke-width=".8"/>
<rect x="1.4" y="10.8" width="11.2" height="2.2" fill="#f2c21c"/>
<path d="M2.6 10.8 L4 13 M5.6 10.8 L7 13 M8.6 10.8 L10 13 M11.4 10.8 L12.4 12.6" stroke="#3a2a00" stroke-width="1.1"/></svg>
<svg class="abs" style="left:1836px;top:39px" width="14" height="14" viewBox="0 0 14 14"><path d="M0.6 0.8 H6 L8 3 L4.4 8.2 L1.6 7Z" fill="#f6e27a"/>
<path d="M4.4 2.4 H9.4 L13.6 6.6 L8.6 13.2 L5.6 9.4Z" fill="#fbf6ee"/>
<path d="M6.4 5.6 L11.4 6.4 L8.4 11.6 L6.2 8.8Z" fill="#f4a6b4"/>
<path d="M7 12.2 L9.6 13.2 L13.4 7.4 L12.4 7.2Z" fill="#4a5a2a"/>
<path d="M6.6 4.2 L10 4.8" stroke="#f2d24a" stroke-width="1.2"/></svg>
<svg class="abs" style="left:1682px;top:88px" width="14" height="12" viewBox="0 0 14 12"><rect x="0" y="0" width="14" height="12" fill="#f4f6fa"/>
<rect x="0" y="0" width="14" height="2" fill="#dfe6f2"/>
<path d="M0 3.6 H14 M0 7.6 H14 M4.6 2 V12 M9.4 2 V12" stroke="#b4bed0" stroke-width=".8"/>
<rect x="1" y="4.4" width="2.6" height="2.4" fill="#d83a3a"/><rect x="5.6" y="4.4" width="2.8" height="2.4" fill="#f0c81c"/><rect x="10.4" y="4.4" width="2.6" height="2.4" fill="#e8e8f4"/>
<rect x="1" y="8.6" width="2.6" height="2.4" fill="#4aa83a"/><rect x="5.6" y="8.6" width="2.8" height="2.4" fill="#e8a41c"/><rect x="10.4" y="8.6" width="2.6" height="2.4" fill="#3a6ad8"/></svg>
<svg class="abs" style="left:1752px;top:89px" width="13" height="9" viewBox="0 0 13 9"><path d="M0.6 4.5 L4.8 1.2 V3.6 H12.6 V5.4 H4.8 V7.8Z" fill="#76d83c"/></svg>
<svg class="abs" style="left:1805px;top:89px" width="13" height="9" viewBox="0 0 13 9"><path d="M12.4 4.5 L8.2 1.2 V3.6 H0.4 V5.4 H8.2 V7.8Z" fill="#76d83c"/></svg>
<svg class="abs" style="left:1858px;top:87px" width="14" height="14" viewBox="0 0 14 14"><rect x="0.4" y="0.4" width="13.2" height="13.2" rx="1" fill="url(#gKey)" stroke="#c8881c" stroke-width=".6"/>
<circle cx="9.4" cy="4.6" r="2.4" fill="none" stroke="#fff" stroke-width="1.5"/>
<path d="M7.6 6.4 L2.6 11.4 M4.2 9.8 L5.6 11.2 M2.8 11.2 L4 12.4" stroke="#fff" stroke-width="1.4" fill="none"/></svg>
<!--ICONEND-->
<!-- footer -->
<div id="foot" class="abs"></div>
<div id="foottxt" class="abs">技术支持：千旺软件</div>
<div id="sbar" class="abs"></div>
<svg class="abs" style="left:1905px;top:0" width="15" height="948" viewBox="0 0 15 948"><path d="M3.4 24.6 L8.7 18.8 L14 24.6" fill="none" stroke="#0c5276" stroke-width="2.8"/><path d="M3.4 923.4 L8.7 929.2 L14 923.4" fill="none" stroke="#0c5276" stroke-width="2.8"/></svg>
</body>
</html>
